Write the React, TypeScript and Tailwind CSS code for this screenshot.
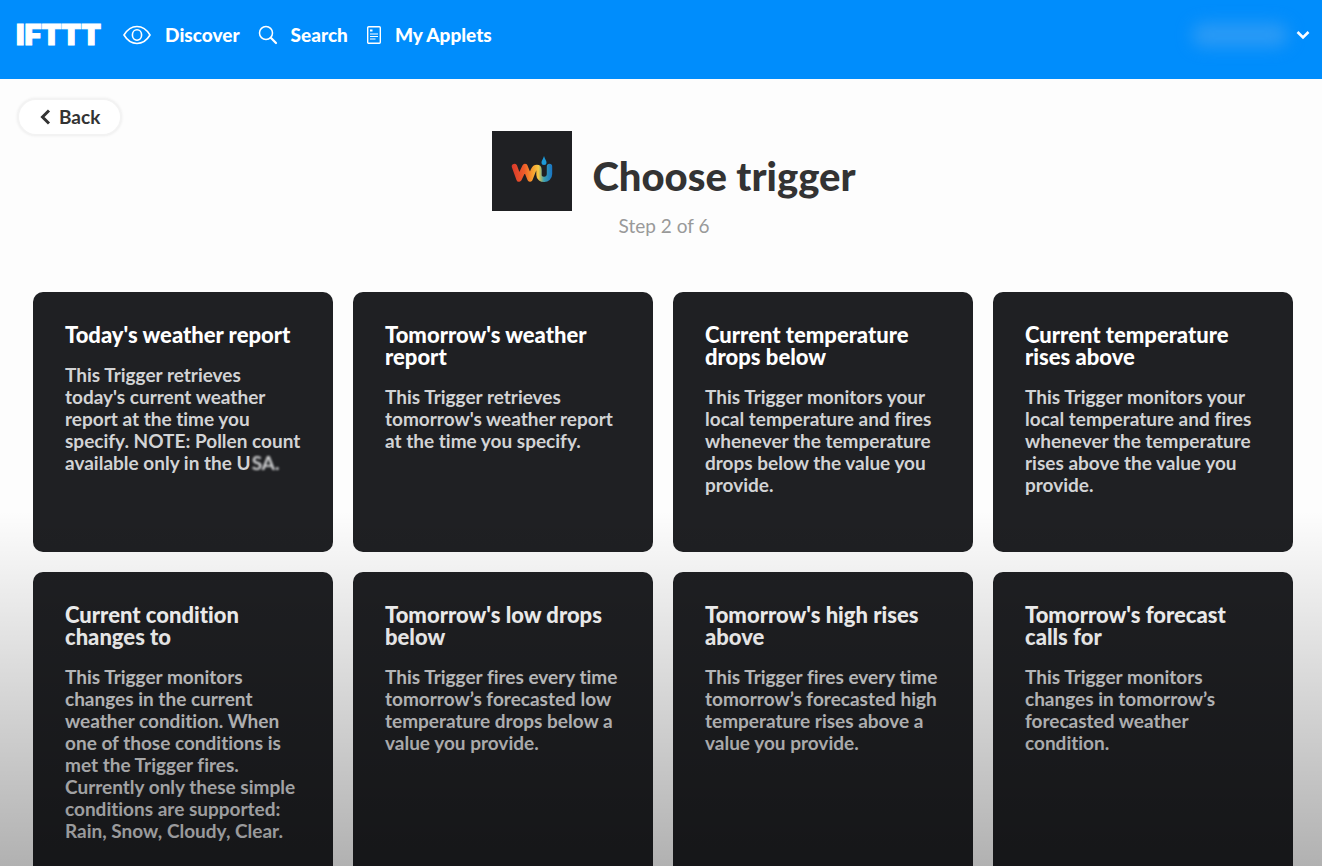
import { JSX } from 'react';

interface Trigger {
  title: string;
  description: string;
  // trailing part of the description that is shown out of focus
  faded?: string;
}

const triggers: Trigger[] = [
  {
    title: "Today's weather report",
    description:
      "This Trigger retrieves today's current weather report at the time you specify. NOTE: Pollen count available only in the U",
    faded: 'SA.',
  },
  {
    title: "Tomorrow's weather report",
    description: "This Trigger retrieves tomorrow's weather report at the time you specify.",
  },
  {
    title: 'Current temperature drops below',
    description:
      'This Trigger monitors your local temperature and fires whenever the temperature drops below the value you provide.',
  },
  {
    title: 'Current temperature rises above',
    description:
      'This Trigger monitors your local temperature and fires whenever the temperature rises above the value you provide.',
  },
  {
    title: 'Current condition changes to',
    description:
      'This Trigger monitors changes in the current weather condition. When one of those conditions is met the Trigger fires. Currently only these simple conditions are supported: Rain, Snow, Cloudy, Clear.',
  },
  {
    title: "Tomorrow's low drops below",
    description:
      'This Trigger fires every time tomorrow’s forecasted low temperature drops below a value you provide.',
  },
  {
    title: "Tomorrow's high rises above",
    description:
      'This Trigger fires every time tomorrow’s forecasted high temperature rises above a value you provide.',
  },
  {
    title: "Tomorrow's forecast calls for",
    description: 'This Trigger monitors changes in tomorrow’s forecasted weather condition.',
  },
];

function EyeIcon(): JSX.Element {
  return (
    <svg width="28" height="20" viewBox="0 0 28 20" fill="none" stroke="currentColor" strokeWidth="1.6">
      <path d="M1 10C4.5 4.2 9 1.5 14 1.5S23.5 4.2 27 10C23.5 15.8 19 18.5 14 18.5S4.5 15.8 1 10Z" />
      <ellipse cx="14" cy="10" rx="4.6" ry="5.2" />
    </svg>
  );
}

function SearchIcon(): JSX.Element {
  return (
    <svg width="20" height="20" viewBox="0 0 20 20" fill="none" stroke="currentColor">
      <circle cx="8" cy="8" r="6.5" strokeWidth="1.5" />
      <path d="M12.8 12.8L18 18" strokeWidth="2.2" strokeLinecap="round" />
    </svg>
  );
}

function AppletsIcon(): JSX.Element {
  return (
    <svg width="16" height="20" viewBox="0 0 16 20" fill="none" stroke="currentColor">
      <rect x="1.7" y="1.7" width="12.6" height="16.6" rx="1" strokeWidth="1.4" />
      <path d="M4 5.5H6.5" strokeWidth="2" />
      <path d="M4 9H12M4 11.5H12M4 14H9.5" strokeWidth="1.1" />
    </svg>
  );
}

function WeatherLogo(): JSX.Element {
  return (
    <svg className="size-20 bg-[#1f2023]" viewBox="0 0 80 80" fill="none" aria-label="Weather Underground">
      <defs>
        <linearGradient id="wave" gradientUnits="userSpaceOnUse" x1="20" y1="0" x2="60" y2="0">
          <stop offset="0" stopColor="#d93a2b" />
          <stop offset="0.3" stopColor="#ee5a2a" />
          <stop offset="0.5" stopColor="#f89a2c" />
          <stop offset="0.66" stopColor="#f6c944" />
          <stop offset="0.8" stopColor="#3c9fae" />
          <stop offset="1" stopColor="#1976c4" />
        </linearGradient>
      </defs>
      <path
        d="M22.5 35.5L27 48L33 35.5L38 48L41.5 39C43 35.5 47 35.5 47 39V44C47 50 57.5 50 57.5 43V35.5"
        stroke="url(#wave)"
        strokeWidth="5.4"
        strokeLinecap="round"
        strokeLinejoin="round"
      />
      <path d="M52 25C52.8 28 54.5 29.5 54.5 31.5A2.5 2.5 0 0 1 49.5 31.5C49.5 29.5 51.2 28 52 25Z" fill="#1d9ad8" />
    </svg>
  );
}

function Navbar(): JSX.Element {
  return (
    <header className="flex h-[79px] items-start justify-between bg-[#008dfc] px-4 pt-[19px] pr-3 text-white">
      <nav className="flex h-8 items-center text-[19px] font-black">
        <a
          href="#"
          className="mr-[22px] font-[Inter,sans-serif] text-[29px] leading-8 font-black [-webkit-text-stroke:1px_white]"
        >
          IFTTT
        </a>
        <a href="#" className="mr-[18px] flex items-center gap-[14px]">
          <EyeIcon />
          Discover
        </a>
        <a href="#" className="mr-[18px] flex items-center gap-[13px]">
          <SearchIcon />
          Search
        </a>
        <a href="#" className="flex items-center gap-[13px]">
          <AppletsIcon />
          My Applets
        </a>
      </nav>
      <button className="flex h-8 items-center gap-2" aria-label="Account menu">
        <span className="h-6 w-24 rounded-full bg-[#2a9af5] blur-sm" />
        <svg width="14" height="10" viewBox="0 0 14 10" fill="none" stroke="currentColor" strokeWidth="2.6">
          <path d="M1.5 2L7 7.5L12.5 2" />
        </svg>
      </button>
    </header>
  );
}

function TriggerCard({ title, description, faded }: Trigger): JSX.Element {
  return (
    <a href="#" className="block min-h-[260px] rounded-[10px] bg-[#1f2023] px-8 pt-8 pb-10">
      <h2 className="text-[22px] leading-[22px] font-black text-white">{title}</h2>
      <p className="mt-[18px] text-[19px] leading-[22px] font-bold text-[#d2d3d5]">
        {description}
        {faded && <span className="pl-px blur-[1px]">{faded}</span>}
      </p>
    </a>
  );
}

export default function App(): JSX.Element {
  return (
    <div className="relative h-screen overflow-hidden bg-[#fdfdfd] font-[Lato,sans-serif] [font-variant-ligatures:none]">
      <Navbar />
      <main>
        <div className="px-[17px] pt-[19px]">
          <button className="flex h-[38px] items-center gap-2 rounded-full border-2 border-[#f3f3f3] bg-white px-5 text-[19px] font-bold text-[#333] shadow-[0_0_3px_#eeeeee]">
            <svg width="12" height="16" viewBox="0 0 12 16" fill="none" stroke="currentColor" strokeWidth="3">
              <path d="M10 1.5L3.5 8L10 14.5" />
            </svg>
            Back
          </button>
        </div>

        <div className="-mt-[5px] flex flex-col items-center pl-[26px]">
          <div className="flex items-center gap-5">
            <WeatherLogo />
            <h1 className="pt-[10px] text-[40px] leading-[48px] font-black text-[#333]">Choose trigger</h1>
          </div>
          <p className="mt-1 pr-5 text-[19px] leading-[22px] text-[#999]">Step 2 of 6</p>
        </div>

        <div className="mt-[55px] grid grid-cols-4 gap-5 pr-[29px] pl-[33px]">
          {triggers.map((trigger) => (
            <TriggerCard key={trigger.title} {...trigger} />
          ))}
        </div>
      </main>

      {/* Fade at the bottom of the window */}
      <div className="pointer-events-none absolute inset-x-0 bottom-0 h-[41vh] bg-linear-to-b from-black/0 to-black/30" />
    </div>
  );
}
